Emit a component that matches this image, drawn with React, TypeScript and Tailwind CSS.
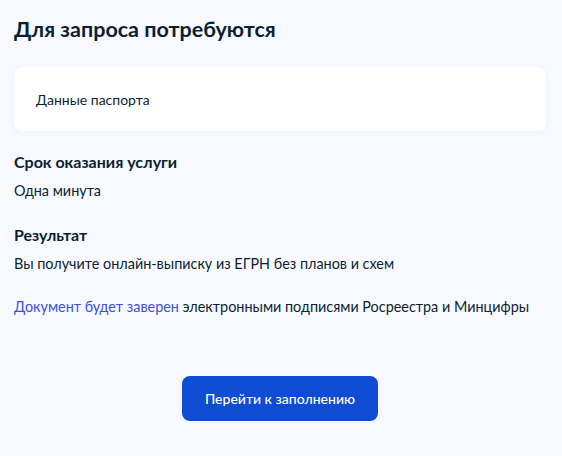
export default function App() {
  return (
    <div
      className="min-h-[456px] w-full bg-[#f8f9fe] pl-[14px] pr-[16px] pt-[14px] text-[#0b1f33]"
      style={{ fontFamily: "Lato, 'Noto Sans', sans-serif" }}
    >
      <h2 className="text-[21.5px] leading-[31px] font-bold">Для запроса потребуются</h2>

      <div className="mt-[22px] flex h-[64px] items-center rounded-[8px] bg-white px-[22px] shadow-[0_1px_4px_rgba(230,235,245,0.6)]">
        <span className="text-[14px]">Данные паспорта</span>
      </div>

      <div className="mt-[19px]">
        <h3 className="text-[16px] leading-[24px] font-bold">Срок оказания услуги</h3>
        <p className="mt-[7px] text-[14.4px] leading-[20px]">Одна минута</p>
      </div>

      <div className="mt-[22px]">
        <h3 className="text-[16px] leading-[24px] font-bold">Результат</h3>
        <p className="mt-[7px] text-[14.4px] leading-[20px]">
          Вы получите онлайн-выписку из ЕГРН без планов и схем
        </p>
      </div>

      <p className="mt-[23px] text-[14.4px] leading-[20px]">
        <a className="text-[#3b50dc]" href="#">Документ будет заверен</a> электронными подписями Росреестра и
        Минцифры
      </p>

      <div className="mt-[59px] flex justify-center">
        <button className="h-[45px] w-[196px] rounded-[8px] bg-[#0d4cd3] text-[14px] font-medium text-white">
          Перейти к заполнению
        </button>
      </div>
    </div>
  );
}
